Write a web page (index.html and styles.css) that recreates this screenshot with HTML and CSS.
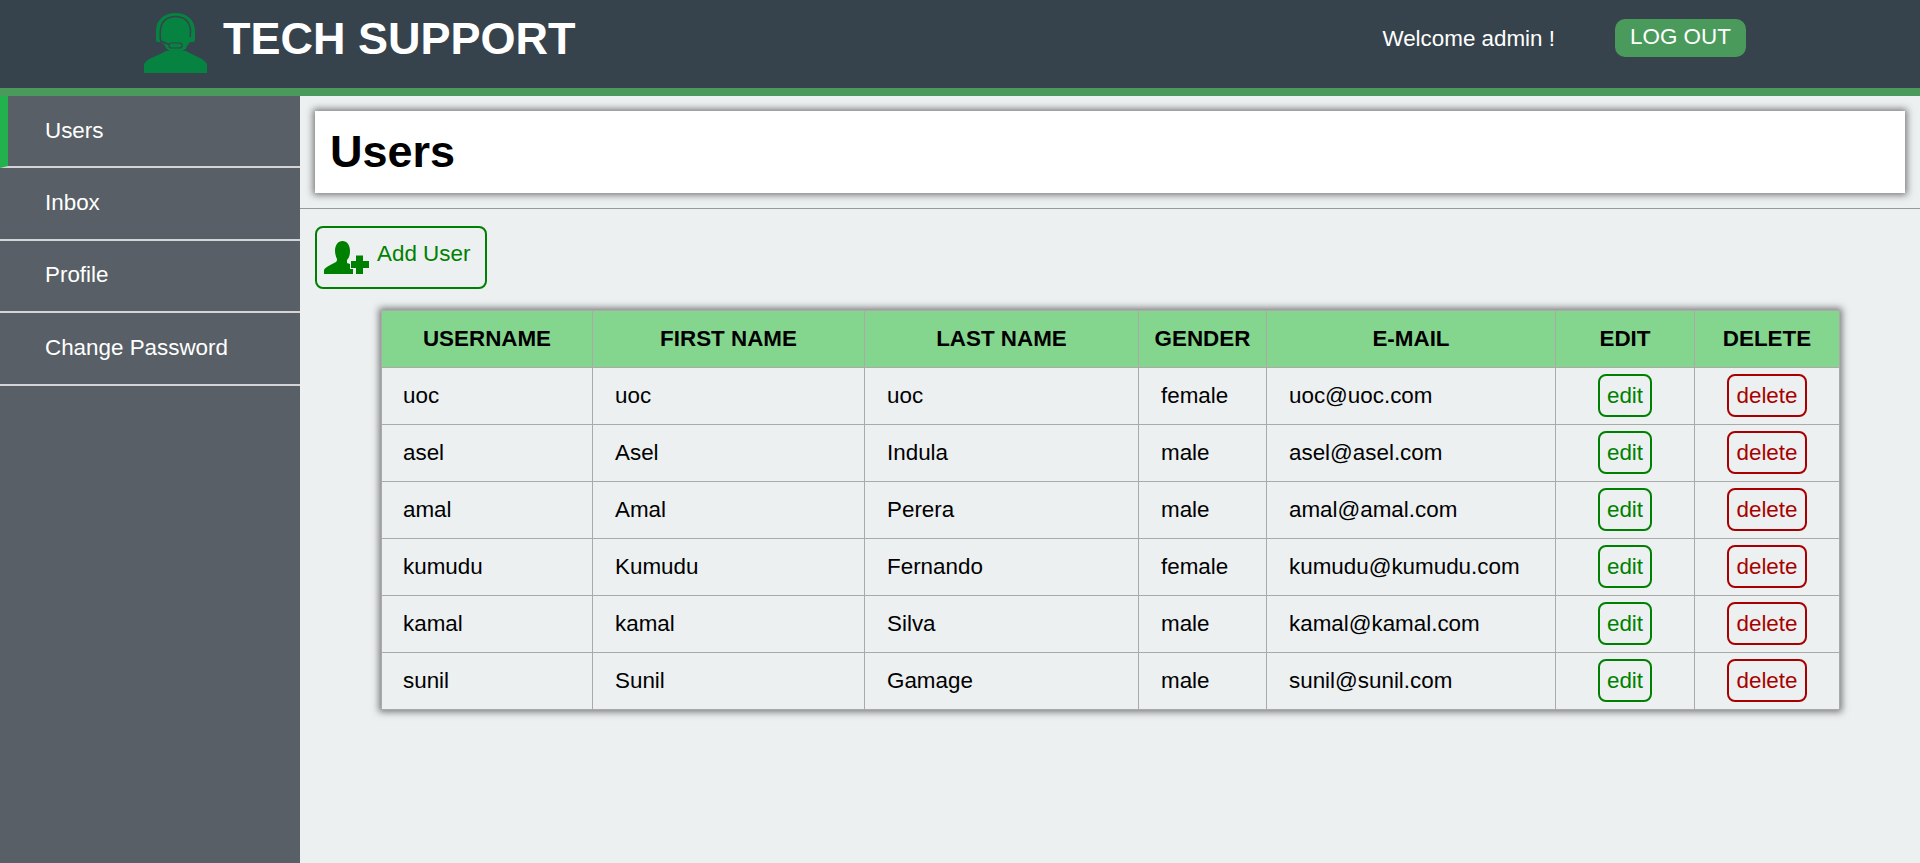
FILE: index.html
```html
<!DOCTYPE html>
<html lang="en">
<head>
  <meta charset="UTF-8">
  <meta name="viewport" content="width=device-width, initial-scale=1.0">
  <title>Tech Support - Users</title>
  <link rel="stylesheet" href="styles.css">
</head>
<body>
  <header class="topbar">
    <svg class="logo" viewBox="0 0 63 60" aria-hidden="true">
      <path class="logo-fill" d="M0 60V51C3 45 14 43 22 38H42C50 43 60 45 63 51V60Z"/>
      <path class="logo-fill" d="M12 18C12 7 20 0 31.5 0C43 0 51 7 51 18V27Q51 29 49 29H46L43 33C42 37 38 39 31.5 39C25 39 22 36 20 31L17 29H14Q12 29 12 27Z"/>
      <path class="logo-gap" d="M17 29C15.5 24 16 14 18.5 10C21 6 26 3.5 31.5 3.5C37 3.5 42 6 44.5 10C46.5 14 47 19 46 24"/>
      <path class="logo-gap" d="M17 28L25 31.5"/>
      <rect class="logo-mic" x="25" y="30" width="13" height="5" rx="2.5"/>
    </svg>
    <div class="brand">TECH SUPPORT</div>
    <div class="welcome">Welcome admin !</div>
    <a class="logout" href="#">LOG OUT</a>
  </header>

  <div class="layout">
    <nav class="sidebar">
      <a class="nav-item active" href="#">Users</a>
      <a class="nav-item" href="#">Inbox</a>
      <a class="nav-item" href="#">Profile</a>
      <a class="nav-item" href="#">Change Password</a>
    </nav>

    <main class="content">
      <div class="title-wrap">
        <div class="title-card">
          <h1>Users</h1>
        </div>
      </div>

      <a class="add-user" href="#">
        <svg class="add-icon" viewBox="0 0 45 33" aria-hidden="true">
          <path d="M18.5 0C23 0 26 4 26 10C26 14 25 17 23 19V22L29 24V33H0V29C1 26 7 24 12 21C13 20 13 19 13 18C12 16 11 13 11 10C11 4 14 0 18.5 0Z"/>
          <path class="add-plus" d="M32 14.5H39V20H45V27H39V33H32V27H27V20H32Z"/>
        </svg>
        <span>Add User</span>
      </a>

      <table class="users">
        <colgroup>
          <col class="col-username">
          <col class="col-first">
          <col class="col-last">
          <col class="col-gender">
          <col class="col-email">
          <col class="col-edit">
          <col class="col-delete">
        </colgroup>
        <thead>
          <tr>
            <th>USERNAME</th>
            <th>FIRST NAME</th>
            <th>LAST NAME</th>
            <th>GENDER</th>
            <th>E-MAIL</th>
            <th>EDIT</th>
            <th>DELETE</th>
          </tr>
        </thead>
        <tbody>
          <tr>
            <td>uoc</td><td>uoc</td><td>uoc</td><td>female</td><td>uoc@uoc.com</td>
            <td class="action"><a class="btn-edit" href="#">edit</a></td>
            <td class="action"><a class="btn-delete" href="#">delete</a></td>
          </tr>
          <tr>
            <td>asel</td><td>Asel</td><td>Indula</td><td>male</td><td>asel@asel.com</td>
            <td class="action"><a class="btn-edit" href="#">edit</a></td>
            <td class="action"><a class="btn-delete" href="#">delete</a></td>
          </tr>
          <tr>
            <td>amal</td><td>Amal</td><td>Perera</td><td>male</td><td>amal@amal.com</td>
            <td class="action"><a class="btn-edit" href="#">edit</a></td>
            <td class="action"><a class="btn-delete" href="#">delete</a></td>
          </tr>
          <tr>
            <td>kumudu</td><td>Kumudu</td><td>Fernando</td><td>female</td><td>kumudu@kumudu.com</td>
            <td class="action"><a class="btn-edit" href="#">edit</a></td>
            <td class="action"><a class="btn-delete" href="#">delete</a></td>
          </tr>
          <tr>
            <td>kamal</td><td>kamal</td><td>Silva</td><td>male</td><td>kamal@kamal.com</td>
            <td class="action"><a class="btn-edit" href="#">edit</a></td>
            <td class="action"><a class="btn-delete" href="#">delete</a></td>
          </tr>
          <tr>
            <td>sunil</td><td>Sunil</td><td>Gamage</td><td>male</td><td>sunil@sunil.com</td>
            <td class="action"><a class="btn-edit" href="#">edit</a></td>
            <td class="action"><a class="btn-delete" href="#">delete</a></td>
          </tr>
        </tbody>
      </table>
    </main>
  </div>
</body>
</html>
```

FILE: styles.css
```css
:root {
  --header: #36434c;
  --green: #4a9a5c;
  --side: #585f66;
  --page: #ecf0f1;
  --line: #aaaaaa;
  --edit: #008000;
  --delete: #a80000;
  --shadow: 0 0 7px 2px #777;
}

* {
  box-sizing: border-box;
  margin: 0;
  padding: 0;
}

html, body {
  height: 100%;
  overflow: hidden;
}

body {
  display: flex;
  flex-direction: column;
  font-family: "Liberation Sans", Arial, sans-serif;
  font-size: 22.4px;
  background-color: var(--page);
  color: #000;
}

a {
  text-decoration: none;
}

/* Top bar */
.topbar {
  display: flex;
  align-items: flex-start;
  flex: 0 0 96px;
  padding: 13px 174px 0 144px;
  background-color: var(--header);
  border-bottom: 8px solid var(--green);
  color: #fff;
}

.logo {
  width: 63px;
  height: 60px;
}

.logo-fill { fill: #068241; }
.logo-gap { fill: none; stroke: var(--header); stroke-width: 1.5; }
.logo-mic { fill: #068241; stroke: var(--header); stroke-width: 1.2; }

.brand {
  margin: 0 0 0 16px;
  font-size: 45px;
  font-weight: 700;
  line-height: 52px;
}

.welcome {
  margin: 13px 0 0 auto;
  line-height: 26px;
}

.logout {
  margin: 6px 0 0 60px;
  width: 131px;
  height: 38px;
  background-color: var(--green);
  border-radius: 10px;
  color: #fff;
  line-height: 36px;
  text-align: center;
}

/* Sidebar + main */
.layout {
  display: flex;
  flex: 1;
  min-height: 0;
}

.sidebar {
  flex: 0 0 300px;
  background-color: var(--side);
}

.nav-item {
  display: block;
  padding: 21.7px 0 23.1px 45px;
  border-bottom: 2px solid #d2d4d6;
  color: #fff;
  line-height: 25.8px;
}

.nav-item.active {
  border-left: 8px solid #22b14c;
  padding: 21.6px 0 22.6px 37px;
}

.content {
  flex: 1;
  min-width: 0;
}

.title-wrap {
  padding: 15px;
  border-bottom: 1px solid #999;
}

.title-card {
  height: 82px;
  padding: 15px;
  background-color: #fff;
  box-shadow: var(--shadow);
}

h1 {
  font-size: 45px;
  line-height: 52px;
}

.add-user {
  display: flex;
  align-items: flex-start;
  gap: 8px;
  width: 172px;
  height: 63px;
  margin: 17px 0 21px 15px;
  padding: 13px 0 0 7px;
  border: 2px solid var(--edit);
  border-radius: 8px;
  color: var(--edit);
  line-height: 26px;
}

.add-icon {
  flex: none;
  width: 45px;
  height: 33px;
  fill: var(--edit);
}

.add-plus {
  stroke: var(--page);
  stroke-width: 2;
  paint-order: stroke;
}

/* Users table */
.users {
  width: 1458px;
  margin-left: 81px;
  border-collapse: collapse;
  table-layout: fixed;
  box-shadow: var(--shadow);
}

.col-username { width: 211px; }
.col-first { width: 272px; }
.col-last { width: 274px; }
.col-gender { width: 128px; }
.col-email { width: 289px; }
.col-edit { width: 139px; }
.col-delete { width: 145px; }

.users th {
  height: 57px;
  background-color: #84d68f;
  border: 1px solid var(--line);
  font-weight: 700;
  text-align: center;
}

.users td {
  height: 57px;
  padding: 0 0 0 22px;
  border: 1px solid var(--line);
  white-space: nowrap;
}

.users td:first-child {
  padding-left: 21px;
}

.users td.action {
  padding: 0;
  text-align: center;
}

.btn-edit, .btn-delete {
  display: inline-block;
  height: 43px;
  margin-bottom: 2px;
  padding: 0 7px;
  border: 2px solid;
  border-radius: 8px;
  line-height: 39px;
  vertical-align: middle;
}

.btn-edit {
  border-color: var(--edit);
  color: var(--edit);
}

.btn-delete {
  border-color: var(--delete);
  color: var(--delete);
}
```
